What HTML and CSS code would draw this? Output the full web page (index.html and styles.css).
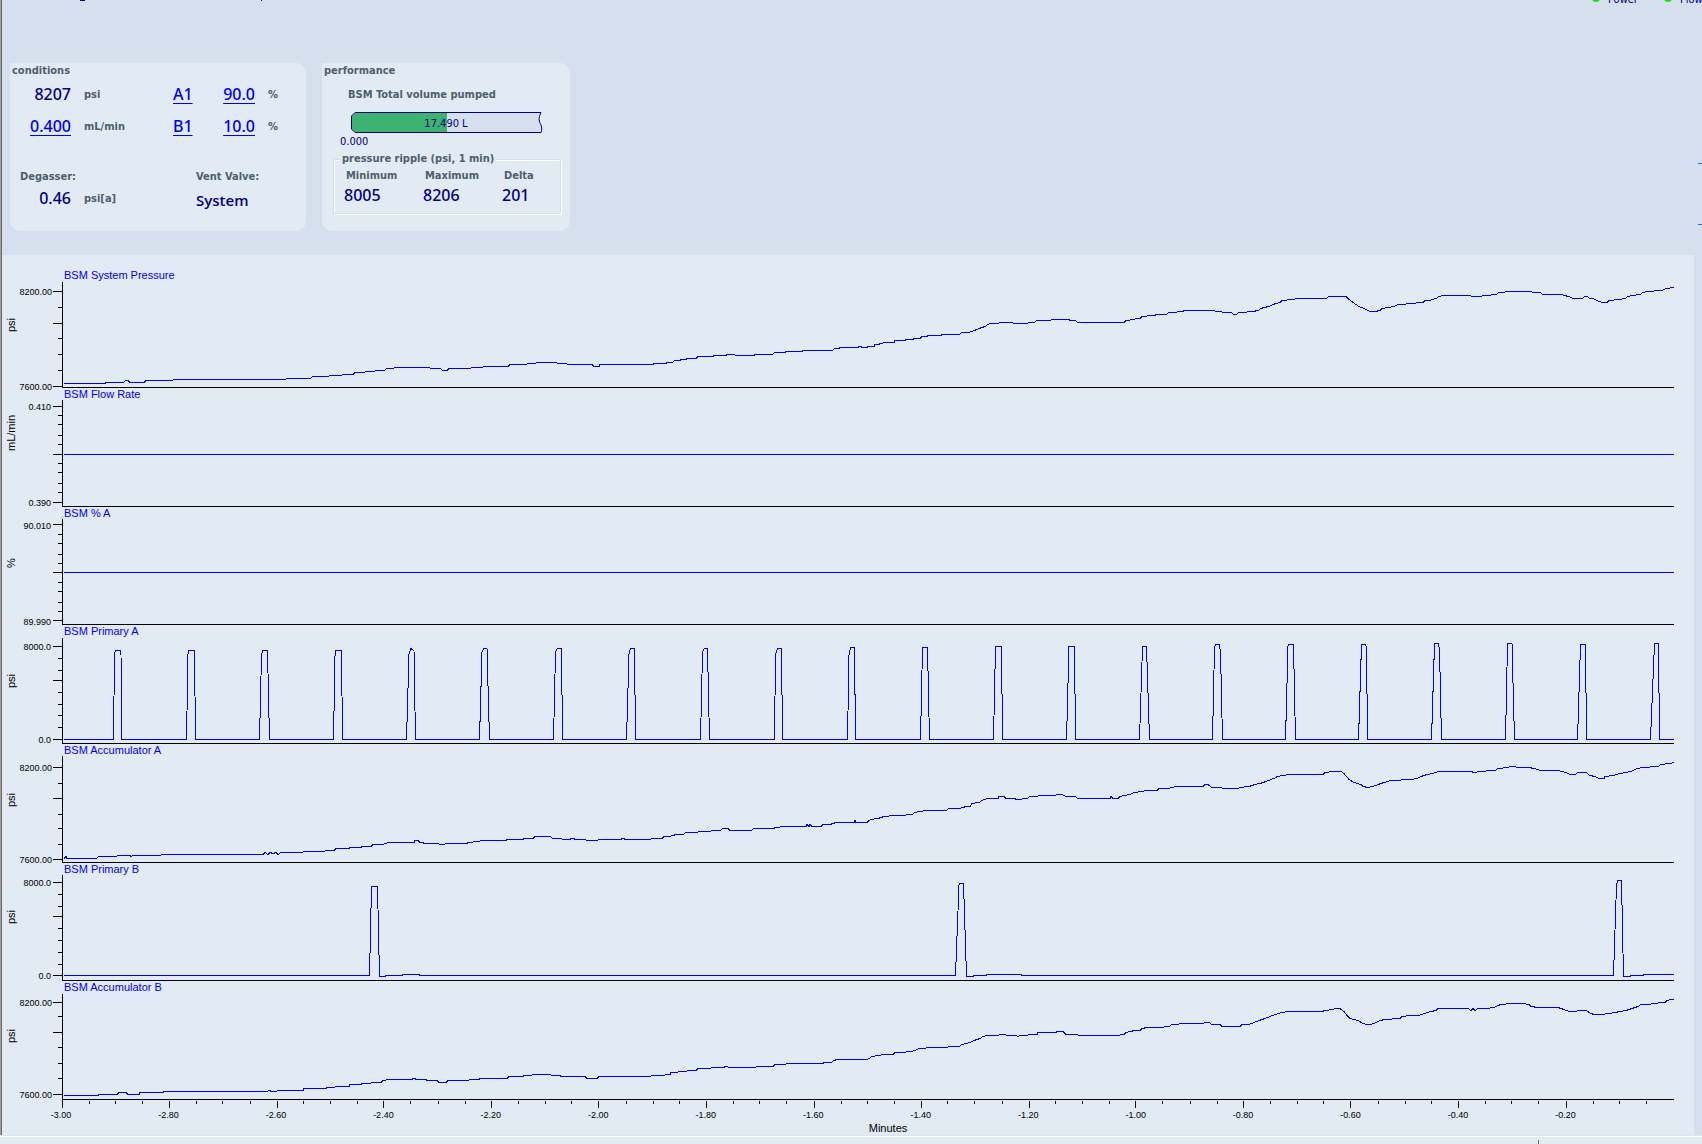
FILE: index.html
```html
<!DOCTYPE html>
<html lang="en">
<head>
<meta charset="utf-8">
<title>BSM pump monitor</title>
<link rel="stylesheet" href="styles.css">
</head>
<body>
<main class="console">
  <header class="topbar">
    <svg class="clipped-title" viewBox="0 0 200 2" aria-hidden="true"><path d="M0 .5h5M181 .5h1"/></svg>
    <ul class="status">
      <li>Power</li>
      <li>Flow</li>
    </ul>
  </header>

  <div class="cards">
    <section class="card conditions">
      <h2 class="card-title">conditions</h2>
      <div class="readings">
        <span class="value">8207</span><span class="unit">psi</span>
        <a class="solvent" href="#a1">A1</a><a class="value" href="#percent-a">90.0</a><span class="unit">%</span>
        <a class="value" href="#flow">0.400</a><span class="unit">mL/min</span>
        <a class="solvent" href="#b1">B1</a><a class="value" href="#percent-b">10.0</a><span class="unit">%</span>
      </div>
      <div class="devices">
        <div>
          <h3 class="label">Degasser:</h3>
          <div class="degasser"><span class="value">0.46</span><span class="unit">psi[a]</span></div>
        </div>
        <div>
          <h3 class="label">Vent Valve:</h3>
          <div class="valve">System</div>
        </div>
      </div>
    </section>

    <section class="card performance">
      <h2 class="card-title">performance</h2>
      <h3 class="label volume-label">BSM Total volume pumped</h3>
      <svg class="gauge" viewBox="0 0 192 21" role="img" aria-label="17.490 L pumped">
        <path class="gauge-back" d="M4 .5H190C187 7 188 9 190 13C191 16 191 18 190 20.500H4L.5 17V4Z"/>
        <path class="gauge-fill" d="M4 1H96V20H4L1 17V4Z"/>
        <path class="gauge-edge" d="M4 .5H190C187 7 188 9 190 13C191 16 191 18 190 20.500H4L.5 17V4Z"/>
        <text x="95" y="15" text-anchor="middle">17.490 L</text>
      </svg>
      <div class="gauge-min">0.000</div>
      <fieldset class="ripple">
        <legend>pressure ripple (psi, 1 min)</legend>
        <dl class="ripple-values">
          <div><dt>Minimum</dt><dd>8005</dd></div>
          <div><dt>Maximum</dt><dd>8206</dd></div>
          <div><dt>Delta</dt><dd>201</dd></div>
        </dl>
      </fieldset>
    </section>
    <div class="next-panel"></div>
  </div>

  <div class="charts">
    <section class="chart">
      <svg class="axis" viewBox="2 269 60 119">
        <path d="M53 291.500h9M58 307.500h4M53 323.500h9M58 338.500h4M58 354.500h4M58 370.500h4M53 386.500h9"/>
        <text x="52" y="295">8200.00</text><text x="52" y="390">7600.00</text>
        <text class="axis-unit" transform="translate(15 325) rotate(-90)">psi</text>
      </svg>
      <h2 class="chart-title">BSM System Pressure</h2>
      <svg class="plot" viewBox="62 269 1612 119" preserveAspectRatio="none">
        <path class="frame" d="M62.500 282V387.500H1674"/>
        <polyline points="64,383.5 105,383.5 106,382.5 123,382.5 126,380.5 128,380.5 130,382.5 144,382.5 146,380.5 172,380.5 174,379.5 285,379.5 287,378.5 310,378.5 313,376.5 328,376.5 330,375.5 341,375.5 343,374.5 353,374.5 355,372.5 364,372.5 366,371.5 374,371.5 376,370.5 384,370.5 387,368.5 393,368.5 395,367.5 429,367.5 431,368.5 440,368.5 443,370.5 447,370.5 449,368.5 470,368.5 472,367.5 482,367.5 484,366.5 508,366.5 510,364.5 526,364.5 528,363.5 535,363.5 537,362.5 556,362.5 558,363.5 566,363.5 568,364.5 592,364.5 594,366.5 599,366.5 600,364.5 653,364.5 654,363.5 666,363.5 667,362.5 672,362.5 675,360.5 680,360.5 681,359.5 686,359.5 687,358.5 696,358.5 698,356.5 713,356.5 714,355.5 726,355.5 727,354.5 734,354.5 736,355.5 754,355.5 755,354.5 772,354.5 775,352.5 785,352.5 786,351.5 802,351.5 803,350.5 832,350.5 835,348.5 839,348.5 840,347.5 858,347.5 859,346.5 861,346.5 862,347.5 867,347.5 868,346.5 874,346.5 875,344.5 879,344.5 880,343.5 886,342.5 894,342.5 895,340.5 905,340.5 906,339.5 913,339.5 914,338.5 920,338.5 922,336.5 927,336.5 928,335.5 941,335.5 942,334.5 959,334.5 962,332.5 968,332.5 972,331.5 979,328.5 985,326.5 988,324.5 990,323.5 998,323.5 1000,322.5 1012,322.5 1014,323.5 1027,323.5 1029,322.5 1034,322.5 1037,320.5 1050,320.5 1052,319.5 1069,319.5 1070,320.5 1075,320.5 1078,322.5 1124,322.5 1126,320.5 1129,320.5 1131,319.5 1134,319.5 1136,318.5 1140,318.5 1142,316.5 1146,316.5 1148,315.5 1155,315.5 1156,314.5 1166,314.5 1169,312.5 1176,312.5 1178,311.5 1183,311.5 1184,310.5 1214,310.5 1216,311.5 1221,311.5 1223,312.5 1231,312.5 1234,314.5 1236,314.5 1239,312.5 1246,312.5 1248,311.5 1253,311.5 1258,310.5 1261,308.5 1264,307.5 1269,306.5 1273,304.5 1276,303.5 1280,302.5 1282,300.5 1286,300.5 1288,299.5 1294,299.5 1296,298.5 1326,298.5 1329,296.5 1346,296.5 1348,298.5 1353,302.5 1359,306.5 1364,308.5 1368,310.5 1370,311.5 1375,311.5 1380,310.5 1382,308.5 1388,307.5 1394,306.5 1398,304.5 1405,304.5 1407,303.5 1415,303.5 1417,302.5 1423,302.5 1425,300.5 1429,300.5 1436,298.5 1439,296.5 1443,295.5 1470,295.5 1472,296.5 1481,296.5 1483,295.5 1490,295.5 1492,294.5 1496,294.5 1499,292.5 1504,292.5 1506,291.5 1531,291.5 1533,292.5 1540,292.5 1543,294.5 1562,294.5 1564,295.5 1569,296.5 1573,298.5 1582,298.5 1585,296.5 1587,296.5 1590,298.5 1593,298.5 1597,300.5 1602,302.5 1607,302.5 1609,300.5 1613,300.5 1615,299.5 1619,299.5 1625,298.5 1628,296.5 1632,295.5 1640,294.5 1643,292.5 1647,291.5 1653,291.5 1655,290.5 1662,290.5 1666,288.5 1669,288.5 1671,287.5 1674,287.5"/>
      </svg>
    </section>

    <section class="chart">
      <svg class="axis" viewBox="2 388 60 119">
        <path d="M53 406.500h9M58 415.500h4M58 424.500h4M58 435.500h4M58 444.500h4M53 454.500h9M58 463.500h4M58 472.500h4M58 483.500h4M58 492.500h4M53 502.500h9"/>
        <text x="51" y="410">0.410</text><text x="51" y="506">0.390</text>
        <text class="axis-unit" transform="translate(15 433) rotate(-90)">mL/min</text>
      </svg>
      <h2 class="chart-title">BSM Flow Rate</h2>
      <svg class="plot" viewBox="62 388 1612 119" preserveAspectRatio="none">
        <path class="frame" d="M62.500 400V506.500H1674"/>
        <polyline points="64,454.5 1674,454.5"/>
      </svg>
    </section>

    <section class="chart">
      <svg class="axis" viewBox="2 507 60 118">
        <path d="M53 524.500h9M58 534.500h4M58 543.500h4M58 554.500h4M58 563.500h4M53 572.500h9M58 582.500h4M58 591.500h4M58 602.500h4M58 611.500h4M53 620.500h9"/>
        <text x="51" y="529">90.010</text><text x="51" y="625">89.990</text>
        <text class="axis-unit" transform="translate(15 563) rotate(-90)">%</text>
      </svg>
      <h2 class="chart-title">BSM % A</h2>
      <svg class="plot" viewBox="62 507 1612 118" preserveAspectRatio="none">
        <path class="frame" d="M62.500 519V624.500H1674"/>
        <polyline points="64,572.5 1674,572.5"/>
      </svg>
    </section>

    <section class="chart">
      <svg class="axis" viewBox="2 625 60 119">
        <path d="M53 646.500h9M58 658.500h4M58 670.500h4M53 680.500h9M58 692.500h4M58 704.500h4M58 715.500h4M58 727.500h4M53 739.500h9"/>
        <text x="51" y="650">8000.0</text><text x="51" y="743">0.0</text>
        <text class="axis-unit" transform="translate(15 681) rotate(-90)">psi</text>
      </svg>
      <h2 class="chart-title">BSM Primary A</h2>
      <svg class="plot" viewBox="62 625 1612 119" preserveAspectRatio="none">
        <path class="frame" d="M62.500 638V743.500H1674"/>
        <polyline points="64,739.5 113.5,739.5 114.5,654 115.5,650.5 120,650.5 121,655 121.5,739.5 186.5,739.5 188,654 189,650.5 194.5,650.5 195.5,739.5 259.5,739.5 261.5,655 262.5,650.5 267.5,650.5 269.5,739.5 333.5,739.5 335,656 336,650.5 341.5,650.5 342.5,739.5 406.5,739.5 409,654 411,648.5 414,651 415.500,739.5 479.5,739.5 482,652 483.5,648.5 487,648.5 489.5,739.5 553.5,739.5 555.5,652 557.500,648.5 561.5,648.5 562.5,739.5 626.5,739.5 629,654 630.5,648.5 634.5,648.5 635.5,739.5 700.5,739.5 702.5,652 704.5,648.5 707.5,648.5 709.5,739.5 774.5,739.5 775.5,654 777.500,648.5 781.5,648.5 782.5,739.5 847.5,739.5 849,655 850.5,647.5 854.5,647.5 855.5,739.5 920.5,739.5 922.5,647.5 927.5,647.5 929.5,739.5 993.5,739.5 995.5,646.5 1001.5,646.5 1002.5,739.5 1066.5,739.5 1069,646.5 1074.5,646.5 1075.5,739.5 1139.5,739.5 1142.5,646.5 1146.5,646.5 1149.5,739.5 1212.5,739.5 1214.5,647 1216,644.5 1219,644.5 1220.5,651 1222.5,739.5 1285.500,739.5 1288,646 1289,644.5 1293.5,644.5 1295.5,739.5 1358.5,739.5 1361.5,644.5 1365,644.5 1366.5,646.5 1367.5,739.5 1431.5,739.5 1434.500,644 1438,643.5 1439.5,648 1441.5,739.5 1505.5,739.5 1507.5,643.5 1512,643.5 1514.500,739.5 1577.5,739.5 1580.5,645 1585.5,644.5 1586.5,739.5 1650.5,739.5 1654.5,643.5 1658.500,643.5 1659.500,739.5 1674,739.5"/>
      </svg>
    </section>

    <section class="chart">
      <svg class="axis" viewBox="2 744 60 119">
        <path d="M53 767.500h9M58 783.500h4M53 798.500h9M58 814.500h4M58 828.500h4M58 844.500h4M53 859.500h9"/>
        <text x="52" y="771">8200.00</text><text x="52" y="863">7600.00</text>
        <text class="axis-unit" transform="translate(15 800) rotate(-90)">psi</text>
      </svg>
      <h2 class="chart-title">BSM Accumulator A</h2>
      <svg class="plot" viewBox="62 744 1612 119" preserveAspectRatio="none">
        <path class="frame" d="M62.500 756V862.500H1674"/>
        <polyline points="64,858.5 66,856.5 67,858.5 96,858.5 99,856.5 116,856.5 118,855.5 130,855.5 131,856.5 133,855.5 160,855.5 162,854.5 263,854.5 265,852.5 268,854.5 270,852.5 273,853.5 276,852.5 278,854.5 281,852.5 302,852.5 304,851.5 324,851.5 326,850.5 334,850.5 336,848.5 349,848.5 350,847.5 361,847.5 362,846.5 371,846.5 373,844.5 383,844.5 388,842.5 414,842.5 415,840.5 418,840.5 420,842.5 427,843.5 438,843.5 440,844.5 444,844.5 446,843.5 467,843.5 468,842.5 478,841.5 482,840.5 506,840.5 507,839.5 523,839.5 524,838.5 533,838.5 535,836.5 550,836.5 553,838.5 561,838.5 563,839.5 568,839.5 573,838.5 576,839.5 585,839.5 587,840.5 597,840.5 599,839.5 620,839.5 623,838.5 626,839.5 650,839.5 652,838.5 662,838.5 664,836.5 670,836.5 672,835.5 677,834.5 683,834.5 686,832.5 696,832.5 700,831.5 710,831.5 712,830.5 720,830.5 723,828.5 728,828.5 730,830.5 751,830.5 754,828.5 771,828.5 778,827.5 782,826.5 806,826.5 807,824.5 809,826.5 810,824.5 812,826.5 821,826.5 823,824.5 831,824.5 832,823.5 837,822.5 854,822.5 855,820.5 856,822.5 867,822.5 869,820.5 871,819.5 878,818.5 884,816.5 894,815.5 905,815.5 907,814.5 912,814.5 915,812.5 919,811.5 927,810.5 946,810.5 949,808.5 960,808.5 962,807.5 967,806.5 970,806.5 972,803.5 979,802.5 982,800.5 987,798.5 998,798.5 999,796.5 1004,796.5 1006,798.5 1013,798.5 1018,799.5 1027,798.5 1030,796.5 1037,796.5 1039,795.5 1055,795.5 1057,794.5 1062,794.5 1066,796.5 1075,796.5 1078,798.5 1110,798.5 1111,796.5 1113,798.5 1118,798.5 1120,796.5 1124,795.5 1130,794.5 1134,792.5 1142,791.5 1146,790.5 1157,790.5 1159,788.5 1169,788.5 1171,787.5 1178,786.5 1203,786.5 1205,784.5 1208,784.5 1212,787.5 1221,787.5 1223,788.5 1238,788.5 1240,787.5 1249,786.5 1255,784.5 1260,783.5 1266,781.5 1271,779.5 1276,777.5 1277,776.5 1283,775.5 1289,774.5 1323,774.5 1325,772.5 1334,771.5 1341,771.5 1344,773.5 1349,779.5 1354,782.5 1361,784.5 1363,786.5 1368,787.5 1373,786.5 1378,784.5 1384,782.5 1391,780.5 1411,779.5 1417,778.5 1421,776.5 1427,774.5 1433,773.5 1438,771.5 1470,771.5 1475,772.5 1479,771.5 1485,771.5 1487,770.5 1495,770.5 1498,768.5 1508,767.5 1510,766.5 1515,766.5 1517,767.5 1529,767.5 1534,768.5 1541,770.5 1558,770.5 1566,772.5 1570,774.5 1575,774.5 1578,772.5 1586,772.5 1590,775.5 1595,776.5 1599,778.5 1604,778.5 1605,776.5 1613,775.5 1620,773.5 1631,771.5 1637,768.5 1643,767.5 1658,766.5 1661,764.5 1670,763.5 1674,762.5"/>
      </svg>
    </section>

    <section class="chart">
      <svg class="axis" viewBox="2 863 60 118">
        <path d="M53 882.500h9M58 894.500h4M58 906.500h4M53 916.500h9M58 928.500h4M58 940.500h4M58 952.500h4M58 964.500h4M53 975.500h9"/>
        <text x="51" y="886">8000.0</text><text x="51" y="979">0.0</text>
        <text class="axis-unit" transform="translate(15 917) rotate(-90)">psi</text>
      </svg>
      <h2 class="chart-title">BSM Primary B</h2>
      <svg class="plot" viewBox="62 863 1612 118" preserveAspectRatio="none">
        <path class="frame" d="M62.500 875V980.500H1674"/>
        <polyline points="64,975.5 369.5,975.5 371.5,886.5 377.5,886.5 379.5,976.5 385,976.5 386,975.5 402,975.5 403,974.5 419,974.5 420,975.5 955.5,975.5 959,885 960,883.5 963.5,883.5 966.5,976.5 973,976.5 974,975.5 986,975.5 987,974.5 1021,974.5 1022,975.5 1613.5,975.5 1616.5,885 1617.500,880.5 1621.5,880.5 1623.500,976.5 1630,976.5 1631,975.5 1643,975.5 1644,974.5 1674,974.5"/>
      </svg>
    </section>

    <section class="chart">
      <svg class="axis" viewBox="2 981 60 119">
        <path d="M53 1002.500h9M58 1016.500h4M53 1032.500h9M58 1047.500h4M58 1063.500h4M58 1078.500h4M53 1094.500h9"/>
        <text x="52" y="1006">8200.00</text><text x="52" y="1098">7600.00</text>
        <text class="axis-unit" transform="translate(15 1036) rotate(-90)">psi</text>
      </svg>
      <h2 class="chart-title">BSM Accumulator B</h2>
      <svg class="plot" viewBox="62 981 1612 119" preserveAspectRatio="none">
        <path class="frame" d="M62.500 994V1099.500H1674"/>
        <polyline points="64,1095.5 98,1095.5 99,1094.5 117,1094.5 119,1092.5 126,1092.5 128,1094.5 139,1094.5 140,1092.5 161,1092.5 166,1091.5 267,1091.5 269,1090.5 272,1091.5 283,1090.5 303,1090.5 304,1088.5 326,1088.5 327,1087.5 334,1087.5 336,1086.5 349,1086.5 350,1084.5 361,1084.5 362,1083.5 370,1083.5 372,1082.5 381,1082.5 383,1080.5 389,1079.5 411,1079.5 414,1078.5 417,1079.5 426,1079.5 427,1080.5 437,1080.5 439,1082.5 446,1082.5 448,1080.5 468,1080.5 470,1079.5 479,1079.5 480,1078.5 507,1078.5 509,1076.5 523,1076.5 524,1075.5 531,1075.5 533,1074.5 550,1074.5 552,1075.5 560,1075.5 561,1076.5 585,1076.5 587,1078.5 597,1078.5 599,1076.5 650,1076.5 652,1075.5 664,1075.5 666,1074.5 670,1074.5 671,1072.5 677,1072.5 679,1071.5 686,1071.5 688,1070.5 696,1070.5 698,1068.5 710,1068.5 712,1067.5 723,1067.5 726,1066.5 730,1067.5 755,1067.5 757,1066.5 773,1066.5 775,1064.5 785,1064.5 787,1063.5 823,1063.5 824,1062.5 831,1062.5 834,1060.5 837,1059.5 867,1059.5 869,1058.5 872,1056.5 878,1055.5 884,1054.5 893,1054.5 895,1052.5 905,1052.5 907,1051.5 912,1051.5 917,1049.5 919,1048.5 925,1048.5 927,1047.5 947,1047.5 949,1046.5 959,1046.5 962,1044.5 970,1042.5 974,1040.5 980,1038.5 983,1036.5 987,1035.5 998,1035.5 1000,1034.5 1005,1034.5 1007,1035.5 1016,1035.5 1018,1036.5 1020,1035.5 1027,1035.5 1029,1034.5 1037,1034.5 1038,1032.5 1055,1032.5 1058,1031.5 1063,1031.5 1066,1034.5 1077,1034.5 1079,1035.5 1119,1035.5 1121,1034.5 1124,1034.5 1126,1032.5 1130,1031.5 1135,1030.5 1140,1030.5 1142,1028.5 1147,1027.5 1160,1027.5 1169,1026.5 1172,1024.5 1178,1024.5 1180,1023.5 1203,1023.5 1205,1022.5 1209,1022.5 1212,1024.5 1220,1024.5 1222,1026.5 1240,1026.5 1242,1024.5 1249,1024.5 1254,1022.5 1259,1020.5 1265,1018.5 1270,1016.5 1275,1014.5 1282,1012.5 1289,1011.5 1322,1011.5 1325,1010.5 1333,1009.5 1335,1008.5 1340,1008.5 1344,1011.5 1347,1015.5 1350,1018.5 1358,1020.5 1363,1023.5 1367,1024.5 1371,1024.5 1376,1022.5 1380,1020.5 1385,1019.5 1400,1018.5 1402,1016.5 1411,1015.5 1418,1015.5 1422,1014.5 1427,1012.5 1431,1011.5 1436,1010.5 1438,1008.5 1468,1008.5 1471,1010.5 1473,1008.5 1475,1010.5 1478,1008.5 1487,1008.5 1494,1007.5 1498,1005.5 1501,1004.5 1511,1003.5 1523,1003.5 1529,1004.5 1531,1006.5 1538,1007.5 1558,1007.5 1564,1009.5 1569,1011.5 1576,1011.5 1578,1010.5 1586,1010.5 1591,1013.5 1594,1014.5 1602,1014.5 1609,1013.5 1615,1012.5 1620,1011.5 1626,1010.5 1632,1008.5 1638,1006.5 1641,1004.5 1650,1004.5 1652,1003.5 1665,1002.5 1667,1000.5 1671,999.5 1674,999.5"/>
      </svg>
    </section>

    <div class="time-axis">
      <svg class="time-ticks" viewBox="62 0 1612 8" preserveAspectRatio="none"><path d="M62.500 0V8M89.500 1V4M115.500 1V4M142.500 1V4M169.500 1V8M196.500 1V4M222.500 1V4M250.500 1V4M277.500 1V8M303.500 1V4M330.500 1V4M357.500 1V4M383.500 1V8M410.500 1V4M438.500 1V4M465.500 1V4M491.500 1V8M518.500 1V4M545.500 1V4M571.500 1V4M598.500 1V8M626.500 1V4M653.500 1V4M679.500 1V4M706.500 1V8M733.500 1V4M759.500 1V4M786.500 1V4M814.500 1V8M841.500 1V4M867.500 1V4M894.500 1V4M921.500 1V8M947.500 1V4M974.500 1V4M1002.500 1V4M1029.500 1V8M1055.500 1V4M1082.500 1V4M1109.500 1V4M1135.500 1V8M1162.500 1V4M1190.500 1V4M1217.500 1V4M1243.500 1V8M1270.500 1V4M1297.500 1V4M1323.500 1V4M1350.500 1V8M1378.500 1V4M1405.500 1V4M1431.500 1V4M1458.500 1V8M1485.500 1V4M1511.500 1V4M1538.500 1V4M1566.500 1V8M1593.500 1V4M1619.500 1V4M1646.500 1V4"/></svg>
      <ol class="time-labels">
        <li>-3.00</li><li>-2.80</li><li>-2.60</li><li>-2.40</li><li>-2.20</li><li>-2.00</li><li>-1.80</li><li>-1.60</li><li>-1.40</li><li>-1.20</li><li>-1.00</li><li>-0.80</li><li>-0.60</li><li>-0.40</li><li>-0.20</li>
      </ol>
      <div class="time-title">Minutes</div>
    </div>
  </div>
</main>
<footer class="statusbar"><span class="divider"></span></footer>
</body>
</html>
```
FILE: styles.css
```css
:root {
  --back: #d6dfee;
  --panel: #e2eaf4;
  --navy: #000080;
  --slate: #4d606c;
  --ui: "DejaVu Sans Condensed", "DejaVu Sans", sans-serif;
  --readout: "Noto Sans", "Open Sans", sans-serif;
  --chart: "Liberation Sans", Arial, sans-serif;
}

* { box-sizing: border-box; }

body, h2, h3, ul, ol, dl, dd { margin: 0; padding: 0; }
ul, ol { list-style: none; }

body {
  min-height: 100vh;
  display: flex;
  flex-direction: column;
  overflow: hidden;
  background: var(--panel);
  color: var(--navy);
  font: 11px/16px var(--ui);
}

svg { display: block; }

.console {
  background: var(--back);
  border-left: 1px solid #a0a0a0;
  box-shadow: inset 1px 0 #696969;
  padding-left: 1px;
}

/* top strip, scrolled almost out of view */
.topbar {
  height: 63px;
  display: flex;
  justify-content: space-between;
  align-items: flex-start;
}
.clipped-title { width: 200px; height: 2px; margin-left: 78px; stroke: var(--navy); shape-rendering: crispEdges; }
.status { display: flex; height: 16px; margin: -8px -10px 0 0; }
.status li { display: flex; align-items: center; width: 72px; gap: 8px; padding-left: 2px; white-space: nowrap; }
.status li:last-child { width: 50px; }
.status li::before { content: ""; width: 8px; height: 8px; border-radius: 50%; margin-bottom: 4px; background: #00f000; }

/* summary cards */
.cards { display: flex; align-items: flex-start; gap: 16px; padding: 0 0 24px 8px; }
.card { height: 168px; background: var(--panel); border-radius: 0 10px 10px 10px; }
.card-title { padding-left: 2px; font: bold 11px/15px var(--ui); color: var(--slate); }
.label, .unit { font: bold 11px/16px var(--ui); color: var(--slate); }
.unit { padding-top: 1px; }
.value { font: 500 16px/20px var(--readout); text-align: right; }
a { color: #0000f0; text-underline-offset: 3px; text-decoration-thickness: 1px; }

.conditions { width: 296px; }
.readings {
  display: grid;
  grid-template-columns: 51px 76px 25px 44px 14px;
  grid-auto-rows: 32px;
  column-gap: 13px;
  align-items: center;
  padding-left: 10px;
}
.solvent { font: 500 16px/20px var(--readout); }
.devices { display: grid; grid-template-columns: 163px 1fr; gap: 13px; padding: 27px 0 0 10px; }
.degasser { display: grid; grid-template-columns: 51px 1fr; column-gap: 13px; align-items: center; height: 26px; }
.valve { font: 600 15px/30px "Open Sans", "Noto Sans", sans-serif; }

.performance { width: 248px; padding-right: 9px; }
.volume-label { padding-left: 26px; line-height: 34px; }
.gauge { width: 192px; height: 21px; margin-left: 29px; fill: none; stroke: var(--navy); }
.gauge-back { fill: var(--back); stroke: none; }
.gauge-fill { fill: #3cb371; stroke: none; }
.gauge text { fill: var(--navy); stroke: none; font: 11px var(--ui); }
.gauge-min { padding: 1px 0 0 18px; }
.ripple {
  height: 63px;
  margin: 1px 0 0 11px;
  padding: 1px 0 0 10px;
  border: 1px solid #d4dce4;
  border-radius: 2px;
  box-shadow: 1px 1px 0 #fff, inset 1px 1px 0 #fff;
}
.ripple legend { margin-left: -4px; padding: 0 2px; background: var(--panel); font-weight: bold; color: var(--slate); }
.ripple-values { display: grid; grid-template-columns: 79px 79px 1fr; }
.ripple dt { padding-left: 2px; font-weight: bold; color: var(--slate); }
.ripple dd { font: 500 16px/22px var(--readout); }

/* edge of the neighbouring panel */
.next-panel { width: 4px; height: 62px; margin: 100px 0 0 auto; border: solid #3f6db5; border-width: 1px 0; }

/* trend charts */
.charts { margin-right: 8px; padding: 14px 20px 0 0; background: var(--panel); font-family: var(--chart); }
.chart { display: grid; grid-template-columns: 60px 1fr; }
.axis { grid-area: 1 / 1; width: 60px; overflow: visible; }
.plot { grid-area: 1 / 2; width: 100%; height: 100%; min-height: 0; contain: size; }
.axis path, .frame, .time-ticks path { fill: none; stroke: #000; shape-rendering: crispEdges; }
.axis text { fill: #000; font-size: 9px; text-anchor: end; }
.axis .axis-unit { font-size: 11px; text-anchor: middle; }
.chart-title { grid-area: 1 / 2; padding-left: 2px; font: 11px/13px var(--chart); color: #0000f0; }
.plot polyline { fill: none; stroke: #0000f0; shape-rendering: crispEdges; }
.plot * { vector-effect: non-scaling-stroke; }

.time-axis { margin-left: 60px; color: #000; }
.time-ticks { width: 100%; height: 8px; }
.time-labels { display: grid; grid-template-columns: repeat(15, 1fr); font-size: 9px; line-height: 14px; }
.time-labels li { width: 24px; margin-left: -13px; text-align: center; }
.time-title { padding-left: 40px; text-align: center; line-height: 13px; }

/* status bar */
.statusbar { flex: 1; min-height: 8px; border-top: 1px solid #e3e3e3; box-shadow: inset 0 1px #fff; padding: 4px 163px 0 0; display: flex; justify-content: flex-end; }
.divider { width: 1px; background: #707070; }
```
